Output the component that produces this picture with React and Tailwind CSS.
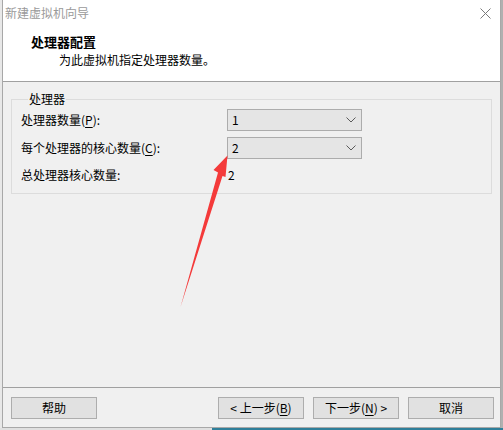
import React from 'react';

const FONT = { fontFamily: '"Microsoft YaHei", "Noto Sans CJK SC", "Noto Sans", sans-serif' };

const Chevron = () => (
  <svg width="10" height="6" viewBox="0 0 10 6" className="shrink-0">
    <polyline points="0.5,0.5 5,5 9.5,0.5" fill="none" stroke="#5a5a5a" strokeWidth="1" />
  </svg>
);

const Combo = ({ value }) => (
  <div className="h-[22px] w-[135px] flex items-center justify-between pl-[4px] pr-[5px] bg-[#e5e5e5] border border-[#acacac] text-[12px] text-black">
    <span>{value}</span>
    <Chevron />
  </div>
);

const Key = ({ children }) => <span className="underline underline-offset-2">{children}</span>;

const Button = ({ children }) => (
  <button className="h-[22px] w-[86px] bg-[#e1e1e1] border border-[#adadad] text-[12px] text-black flex items-center justify-center">
    {children}
  </button>
);

export default function App() {
  return (
    <div className="w-[503px] h-[430px] flex flex-col bg-[#dcdcdc] relative overflow-hidden" style={FONT}>
      <div className="flex h-[428px]">
        <div className="w-[2px] bg-[#e8e8e8]" />
        <div className="w-[499px] flex flex-col border-l border-r border-b border-[#a8a8a8] bg-[#f0f0f0]">
          {/* title bar */}
          <div className="h-[31px] bg-white flex items-center justify-between pl-[2px] pr-[9px] pb-[5px]">
            <span className="text-[12px] text-[#9a9a9a]">新建虚拟机向导</span>
            <svg width="11" height="11" viewBox="0 0 11 11">
              <line x1="0.5" y1="0.5" x2="10.5" y2="10.5" stroke="#7a7a7a" strokeWidth="1" />
              <line x1="10.5" y1="0.5" x2="0.5" y2="10.5" stroke="#7a7a7a" strokeWidth="1" />
            </svg>
          </div>
          {/* header */}
          <div className="h-[51px] bg-white border-b border-[#a0a0a0] flex flex-col pl-[28px] pt-[2px]">
            <span className="text-[13px] font-bold text-black leading-[18px]">处理器配置</span>
            <span className="text-[12px] text-black leading-[18px] pl-[28px]">为此虚拟机指定处理器数量。</span>
          </div>
          {/* body */}
          <div className="flex-1 flex flex-col pt-[10px] px-[8px]">
            <fieldset className="border border-[#dcdcdc] px-[9px] pb-[8px]">
              <legend className="ml-[7px] px-[1px] text-[12px] leading-[14px] text-black">处理器</legend>
              <div className="grid grid-cols-[206px_135px] grid-rows-[22px_22px_20px] gap-y-[6px] pt-[3px] text-[12px] text-black">
                <div className="flex items-center">处理器数量(<Key>P</Key>):</div>
                <Combo value="1" />
                <div className="flex items-center">每个处理器的核心数量(<Key>C</Key>):</div>
                <Combo value="2" />
                <div className="flex items-center">总处理器核心数量:</div>
                <div className="flex items-center pl-[1px]">2</div>
              </div>
            </fieldset>
          </div>
          {/* footer */}
          <div className="h-[40px] border-t border-[#a0a0a0] flex items-start justify-between pt-[9px] pl-[8px] pr-[6px]">
            <Button>帮助</Button>
            <div className="flex gap-[9px]">
              <Button>&lt; 上一步(<Key>B</Key>)</Button>
              <Button>下一步(<Key>N</Key>) &gt;</Button>
              <Button>取消</Button>
            </div>
          </div>
        </div>
        <div className="w-[2px] bg-[#b0b0b0]" />
      </div>
      <div className="flex h-[2px]">
        <div className="w-[212px] bg-[#e0e0e0]" />
        <div className="flex-1 bg-[#2f7f9a]" />
      </div>
      {/* red arrow annotation */}
      <svg className="absolute left-0 top-0 pointer-events-none" width="503" height="430" viewBox="0 0 503 430">
        <polygon points="227.5,155.5 225.5,177 222.5,176 180.5,307 218,172.5 213.5,170" fill="#f43a3a" />
      </svg>
    </div>
  );
}
